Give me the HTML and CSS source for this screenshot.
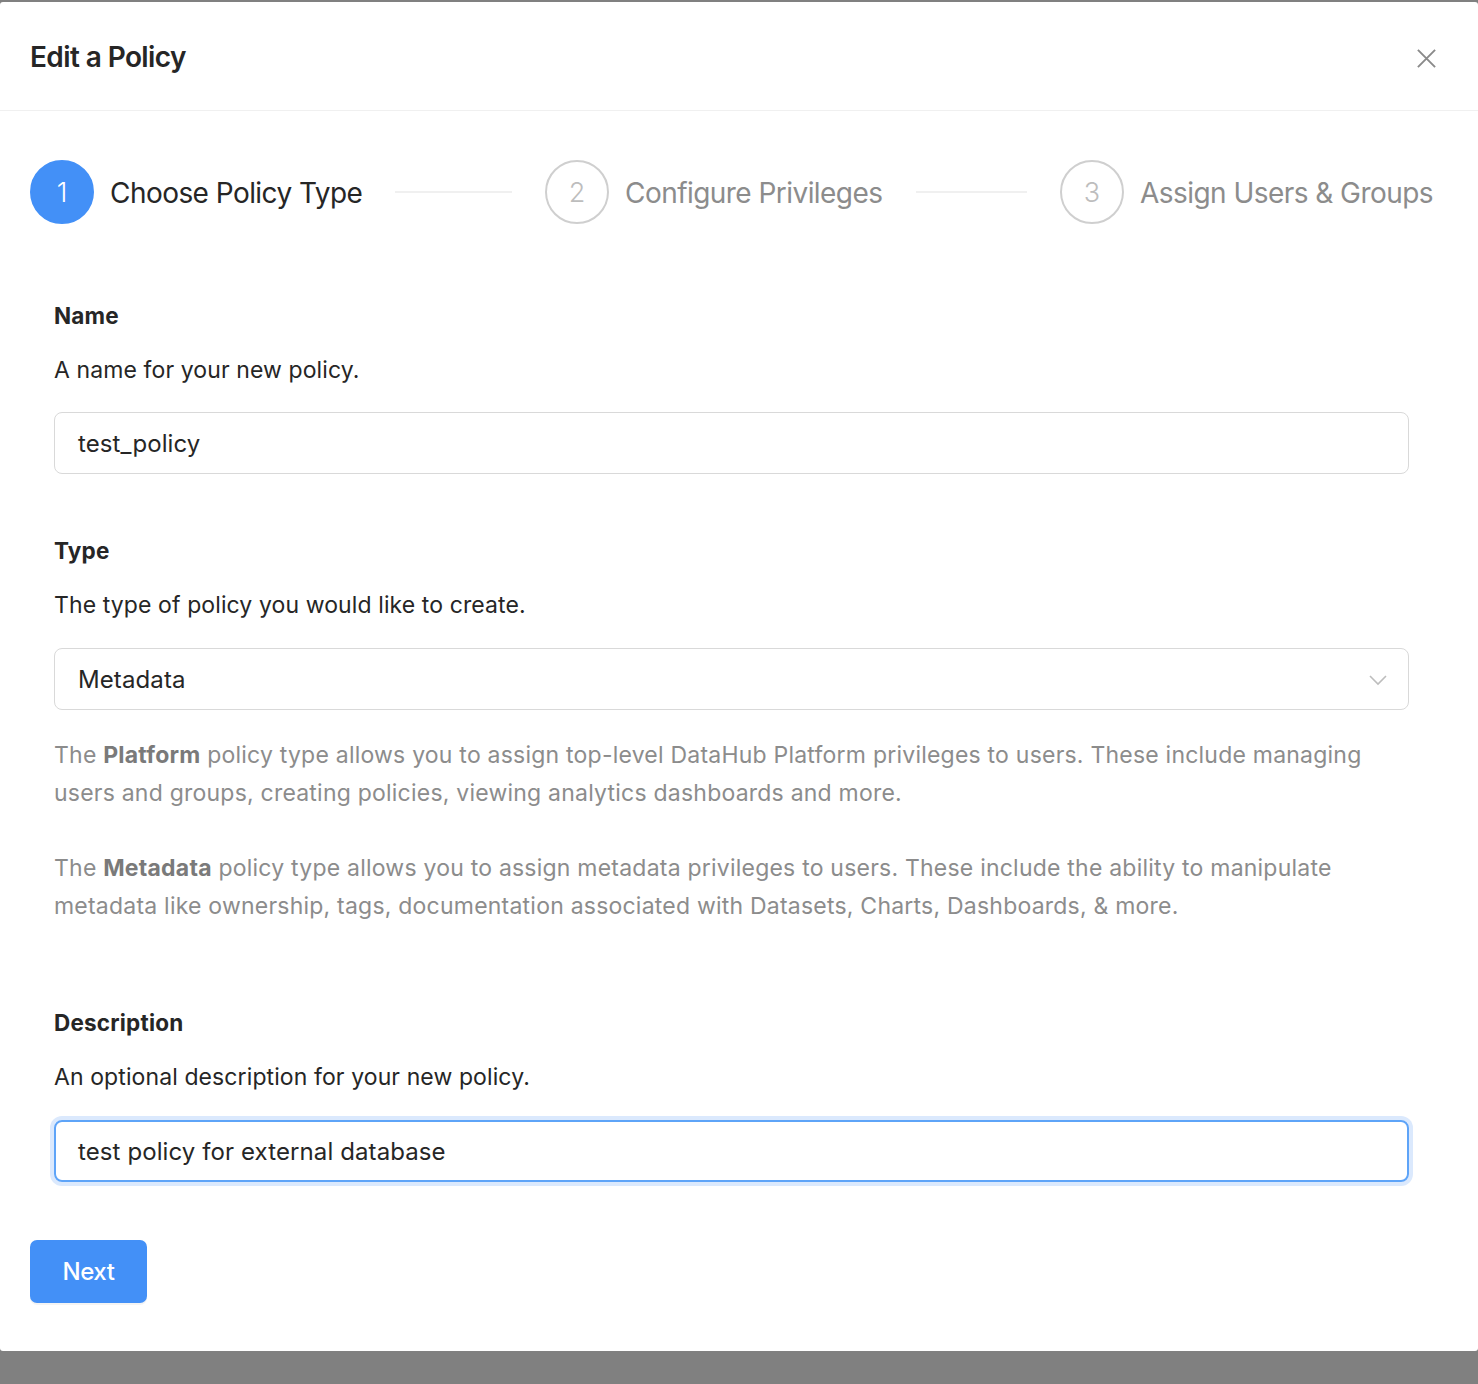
FILE: index.html
```html
<!DOCTYPE html>
<html>
<head>
<meta charset="utf-8">
<link rel="stylesheet" href="styles.css">
</head>
<body>
<div class="modal">
  <div class="modal-header">
    <div class="modal-title">Edit a Policy</div>
    <svg class="close" width="22" height="22" viewBox="0 0 22 22"><path d="M2 2 L20 20 M20 2 L2 20" stroke="#8a8a8a" stroke-width="2" fill="none"/></svg>
  </div>
  <div class="modal-body">
    <div class="steps">
      <div class="step active">
        <div class="step-icon">1</div>
        <div class="step-title">Choose Policy Type</div>
        <div class="step-line"></div>
      </div>
      <div class="step">
        <div class="step-icon">2</div>
        <div class="step-title">Configure Privileges</div>
        <div class="step-line"></div>
      </div>
      <div class="step last">
        <div class="step-icon">3</div>
        <div class="step-title">Assign Users &amp; Groups</div>
      </div>
    </div>
    <div class="form">
      <div class="label label-first">Name</div>
      <div class="help">A name for your new policy.</div>
      <div class="input">test_policy</div>

      <div class="label label-type">Type</div>
      <div class="help">The type of policy you would like to create.</div>
      <div class="input select">Metadata
        <svg class="chev" width="18" height="12" viewBox="0 0 18 12"><path d="M1 2 L9 10 L17 2" stroke="#bdbdbd" stroke-width="1.6" fill="none"/></svg>
      </div>
      <p class="para para-first">The <b>Platform</b> policy type allows you to assign top-level DataHub Platform privileges to users. These include managing users and groups, creating policies, viewing analytics dashboards and more.</p>
      <p class="para">The <b>Metadata</b> policy type allows you to assign metadata privileges to users. These include the ability to manipulate metadata like ownership, tags, documentation associated with Datasets, Charts, Dashboards, &amp; more.</p>

      <div class="label label-desc">Description</div>
      <div class="help">An optional description for your new policy.</div>
      <div class="input focused">test policy for external database</div>
    </div>
    <button class="btn-next">Next</button>
  </div>
</div>
</body>
</html>
```
FILE: styles.css
```css
html, body {
  margin: 0;
  padding: 0;
}
body {
  background: #808080;
  width: 1478px;
  height: 1384px;
  overflow: hidden;
  font-family: Inter, "Noto Sans", sans-serif;
  color: #262626;
}
.modal {
  margin-top: 2px;
  height: 1349px;
  background: #fff;
  border-radius: 3px;
  box-sizing: border-box;
}
.modal-header {
  height: 109px;
  box-sizing: border-box;
  border-bottom: 1px solid #f0f0f0;
  display: flex;
  align-items: center;
  justify-content: space-between;
  padding: 0 41px 0 30px;
}
.modal-title {
  font-size: 28px;
  font-weight: 600;
  letter-spacing: -0.6px;
  color: #262626;
  margin-top: 1px;
}
.close {
  margin-top: 4px;
  width: 21px;
  height: 21px;
}
.modal-body {
  padding: 49px 45px 0 30px;
}
.steps {
  display: flex;
  gap: 33px;
}
.step {
  flex: 1;
  display: flex;
  align-items: center;
  overflow: hidden;
  min-width: 0;
}
.step.last {
  flex: none;
}
.step-icon {
  width: 64px;
  height: 64px;
  box-sizing: border-box;
  border-radius: 50%;
  border: 2px solid #cfcfcf;
  color: #bdbdbd;
  display: flex;
  align-items: center;
  justify-content: center;
  font-size: 27px;
  font-weight: 300;
  flex: none;
}
.step.active .step-icon {
  background: #4390f7;
  border-color: #4390f7;
  color: #fff;
}
.step-title {
  margin-left: 16px;
  margin-top: 2px;
  font-size: 28px;
  font-weight: 400;
  color: #8c8c8c;
  white-space: nowrap;
  letter-spacing: -0.55px;
}
.step.active .step-title {
  color: #262626;
}
.step-line {
  flex: 1;
  height: 2px;
  background: #f0f0f0;
  margin-left: 33px;
}
.form {
  padding: 0 24px;
}
.label {
  font-size: 22.5px;
  font-weight: 700;
  line-height: 32px;
  letter-spacing: 0.2px;
  color: #262626;
}
.label-first { margin-top: 76px; }
.label-type { margin-top: 61px; }
.label-desc { margin-top: 82px; }
.help {
  font-size: 23px;
  line-height: 32px;
  margin-top: 22px;
  letter-spacing: 0.1px;
  color: #262626;
}
.input {
  margin-top: 26px;
  height: 62px;
  box-sizing: border-box;
  border: 1px solid #d9d9d9;
  border-radius: 8px;
  padding: 0 23px;
  display: flex;
  align-items: center;
  font-size: 24px;
  letter-spacing: 0.1px;
  color: #262626;
  position: relative;
}
.select {
  margin-top: 27px;
}
.chev {
  position: absolute;
  right: 21px;
  top: 25px;
}
.focused {
  margin-top: 27px;
  border: 2px solid #5ea4f8;
  padding-left: 22px;
  box-shadow: 0 0 0 4px #dbe9fd;
}
.para {
  margin: 0;
  font-size: 23px;
  line-height: 38px;
  color: #8c8c8c;
  letter-spacing: 0.22px;
}
.para b {
  font-weight: 700;
  color: #7a7a7a;
}
.para-first {
  margin-top: 26px;
}
.para + .para {
  margin-top: 37px;
}
.btn-next {
  margin-top: 58px;
  width: 117px;
  height: 63px;
  border: none;
  border-radius: 7px;
  background: #4390f7;
  color: #fff;
  font-family: Inter, "Noto Sans", sans-serif;
  font-size: 24px;
  font-weight: 500;
  letter-spacing: -0.4px;
  box-shadow: 0 2px 0 rgba(0,0,0,0.045);
  padding: 0;
}
```
